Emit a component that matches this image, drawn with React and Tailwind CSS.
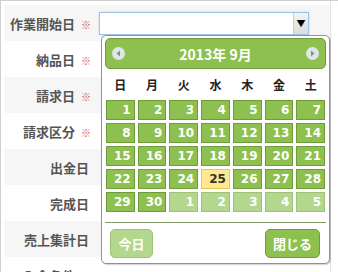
import React from "react";

const rows = [
  { label: "作業開始日", req: true },
  { label: "納品日", req: true },
  { label: "請求日", req: true },
  { label: "請求区分", req: true },
  { label: "出金日", req: false },
  { label: "完成日", req: false },
  { label: "売上集計日", req: false },
  { label: "入金条件", req: true },
];

const weekDays = ["日", "月", "火", "水", "木", "金", "土"];

// 2013-09: starts on Sunday, 30 days, then next month 1..5
const days = [];
for (let d = 1; d <= 30; d++) days.push({ n: d, cur: true });
for (let d = 1; d <= 5; d++) days.push({ n: d, cur: false });

const NavCircle = ({ dir }) => (
  <svg width="13" height="13" viewBox="0 0 13 13">
    <circle cx="6.5" cy="6.5" r="6.5" fill="#dfe5ef" />
    {dir === "left" ? (
      <polygon points="8,3.5 8,9.5 4.5,6.5" fill="#7f9a62" />
    ) : (
      <polygon points="5,3.5 5,9.5 8.5,6.5" fill="#7f9a62" />
    )}
  </svg>
);

const DayCell = ({ day }) => {
  const today = day.cur && day.n === 25;
  let cls = "bg-[#8dc04e] border-[#6e9b3c] text-white";
  if (today) cls = "bg-[#ffe98e] border-[#eac64a] text-[#333]";
  else if (!day.cur) cls = "bg-[#b3d78d] border-[#9dc27b] text-white";
  return (
    <div
      className={`h-[20px] border flex items-center justify-end pr-[3px] text-[12px] font-bold leading-none ${cls}`}
      style={{ fontFamily: '"DejaVu Sans", Verdana, sans-serif' }}
    >
      {day.n}
    </div>
  );
};

export default function App() {
  return (
    <div
      className="relative w-[338px] h-[272px] overflow-hidden bg-white border-t border-l border-[#cfcfcf]"
      style={{ fontFamily: '"Noto Sans CJK JP", "Noto Sans", sans-serif' }}
    >
      {/* form rows */}
      <div className="w-[330px] pt-[4px] pl-[3px] border-r border-[#e2e2e2] h-full">
        {rows.map((r, i) => (
          <div
            key={r.label}
            className={`flex h-[36px] items-center ${i % 2 === 0 ? "bg-[#f6f6f6]" : "bg-white"}`}
          >
            <div
              className={`w-[93px] shrink-0 text-right text-[13px] font-bold text-[#555] leading-none ${
                r.req ? "pr-[6px]" : "pr-[8px]"
              }`}
            >
              {r.label}
              {r.req && <span className="ml-[6px] text-[10px] text-[#e0505a] font-normal">※</span>}
            </div>
            {i === 0 && (
              <div className="ml-[2px] w-[210px] h-[23px] flex border border-[#9fc3e6] bg-white shadow-[0_0_2px_#bcd6ef]">
                <div className="flex-1" />
                <div className="w-[15px] flex items-center justify-center border-l border-[#cdcdcd] bg-gradient-to-b from-[#f4f4f4] to-[#dcdcdc] text-[9px] text-black leading-none">
                  ▼
                </div>
              </div>
            )}
          </div>
        ))}
      </div>

      {/* calendar popover */}
      <div className="absolute left-[100px] top-[34px] w-[229px] h-[229px] bg-white border border-[#8a9c6a] rounded-[5px] shadow-[1px_1px_1px_rgba(0,0,0,0.18)] flex flex-col">
        <div className="mx-[3px] mt-[2px] h-[31px] bg-[#8dc04e] border border-[#6e9b3c] rounded-[5px] flex items-center justify-between px-[6px]">
          <NavCircle dir="left" />
          <span className="text-white font-bold text-[14px] leading-none">2013年 9月</span>
          <NavCircle dir="right" />
        </div>

        <div className="mx-[4px] grid grid-cols-7 gap-x-[3px] h-[31px] items-center">
          {weekDays.map((w) => (
            <div key={w} className="text-center text-[12px] font-bold text-[#222] leading-none">
              {w}
            </div>
          ))}
        </div>

        <div className="mx-[4px] grid grid-cols-7 gap-[3px]">
          {days.map((d, i) => (
            <DayCell key={i} day={d} />
          ))}
        </div>

        <div className="mx-[3px] mt-[10px] h-px bg-[#86996a]" />

        <div className="mt-[6px] flex justify-between pl-[8px] pr-[9px]">
          <button className="w-[43px] h-[29px] rounded-[5px] bg-[#b3d78d] border border-[#9dc27b] text-white text-[13px] font-bold leading-none">
            今日
          </button>
          <button className="w-[55px] h-[29px] rounded-[5px] bg-[#8dc04e] border border-[#6e9b3c] text-white text-[13px] font-bold leading-none">
            閉じる
          </button>
        </div>
      </div>
    </div>
  );
}
